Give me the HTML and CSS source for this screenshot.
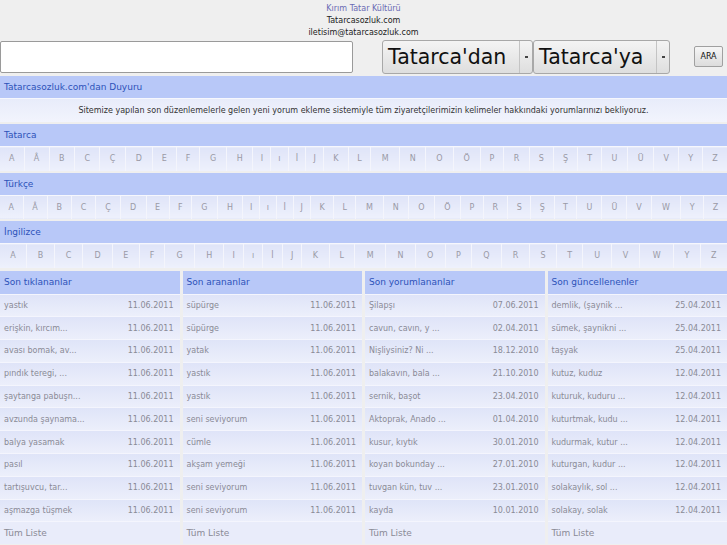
FILE: index.html
```html
<!DOCTYPE html>
<html lang="tr">
<head>
<meta charset="utf-8">
<title>Tatarcasozluk.com</title>
<link rel="stylesheet" href="styles.css">
</head>
<body>
<header class="top">
  <div class="top-line link">Kırım Tatar Kültürü</div>
  <div class="top-line">Tatarcasozluk.com</div>
  <div class="top-line">iletisim@tatarcasozluk.com</div>
</header>
<form class="search">
  <input class="query" type="text">
  <div class="select sel-from"><span class="sel-text">Tatarca'dan</span><span class="sel-arrow"><i></i></span></div>
  <div class="select sel-to"><span class="sel-text">Tatarca'ya</span><span class="sel-arrow"><i></i></span></div>
  <span class="btn">ARA</span>
</form>

<section class="block">
  <div class="bar">Tatarcasozluk.com'dan Duyuru</div>
  <div class="notice">Sitemize yapılan son düzenlemelerle gelen yeni yorum ekleme sistemiyle tüm ziyaretçilerimizin kelimeler hakkındaki yorumlarınızı bekliyoruz.</div>
</section>

<section class="block">
  <div class="bar">Tatarca</div>
  <table class="letters"><tr>
    <td>A</td><td>Â</td><td>B</td><td>C</td><td>Ç</td><td>D</td><td>E</td><td>F</td><td>G</td><td>H</td><td>I</td><td>ı</td><td>İ</td><td>J</td><td>K</td><td>L</td><td>M</td><td>N</td><td>O</td><td>Ö</td><td>P</td><td>R</td><td>S</td><td>Ş</td><td>T</td><td>U</td><td>Ü</td><td>V</td><td>Y</td><td>Z</td>
  </tr></table>
</section>

<section class="block">
  <div class="bar">Türkçe</div>
  <table class="letters"><tr>
    <td>A</td><td>Â</td><td>B</td><td>C</td><td>Ç</td><td>D</td><td>E</td><td>F</td><td>G</td><td>H</td><td>I</td><td>ı</td><td>İ</td><td>J</td><td>K</td><td>L</td><td>M</td><td>N</td><td>O</td><td>Ö</td><td>P</td><td>R</td><td>S</td><td>Ş</td><td>T</td><td>U</td><td>Ü</td><td>V</td><td>W</td><td>Y</td><td>Z</td>
  </tr></table>
</section>

<section class="block">
  <div class="bar">İngilizce</div>
  <table class="letters"><tr>
    <td>A</td><td>B</td><td>C</td><td>D</td><td>E</td><td>F</td><td>G</td><td>H</td><td>I</td><td>ı</td><td>İ</td><td>J</td><td>K</td><td>L</td><td>M</td><td>N</td><td>O</td><td>P</td><td>Q</td><td>R</td><td>S</td><td>T</td><td>U</td><td>V</td><td>W</td><td>Y</td><td>Z</td>
  </tr></table>
</section>

<div class="lists">
  <div class="list">
    <div class="bar">Son tıklananlar</div>
    <div class="row"><span>yastık</span><span>11.06.2011</span></div>
    <div class="row"><span>erişkin, kırcım...</span><span>11.06.2011</span></div>
    <div class="row"><span>avası bomak, av...</span><span>11.06.2011</span></div>
    <div class="row"><span>pındık teregi, ...</span><span>11.06.2011</span></div>
    <div class="row"><span>şaytanga pabuşn...</span><span>11.06.2011</span></div>
    <div class="row"><span>avzunda şaynama...</span><span>11.06.2011</span></div>
    <div class="row"><span>balya yasamak</span><span>11.06.2011</span></div>
    <div class="row"><span>pasıl</span><span>11.06.2011</span></div>
    <div class="row"><span>tartışuvcu, tar...</span><span>11.06.2011</span></div>
    <div class="row"><span>aşmazga tüşmek</span><span>11.06.2011</span></div>
    <div class="row more">Tüm Liste</div>
  </div>
  <div class="list">
    <div class="bar">Son arananlar</div>
    <div class="row"><span>süpürge</span><span>11.06.2011</span></div>
    <div class="row"><span>süpürge</span><span>11.06.2011</span></div>
    <div class="row"><span>yatak</span><span>11.06.2011</span></div>
    <div class="row"><span>yastık</span><span>11.06.2011</span></div>
    <div class="row"><span>yastık</span><span>11.06.2011</span></div>
    <div class="row"><span>seni seviyorum</span><span>11.06.2011</span></div>
    <div class="row"><span>cümle</span><span>11.06.2011</span></div>
    <div class="row"><span>akşam yemeği</span><span>11.06.2011</span></div>
    <div class="row"><span>seni seviyorum</span><span>11.06.2011</span></div>
    <div class="row"><span>seni seviyorum</span><span>11.06.2011</span></div>
    <div class="row more">Tüm Liste</div>
  </div>
  <div class="list">
    <div class="bar">Son yorumlananlar</div>
    <div class="row"><span>Şilapşı</span><span>07.06.2011</span></div>
    <div class="row"><span>cavun, cavın, y ...</span><span>02.04.2011</span></div>
    <div class="row"><span>Nişliysiniz? Ni ...</span><span>18.12.2010</span></div>
    <div class="row"><span>balakavın, bala ...</span><span>21.10.2010</span></div>
    <div class="row"><span>sernik, başot</span><span>23.04.2010</span></div>
    <div class="row"><span>Aktoprak, Anado ...</span><span>01.04.2010</span></div>
    <div class="row"><span>kusur, kıytık</span><span>30.01.2010</span></div>
    <div class="row"><span>koyan bokunday ...</span><span>27.01.2010</span></div>
    <div class="row"><span>tuvgan kün, tuv ...</span><span>23.01.2010</span></div>
    <div class="row"><span>kayda</span><span>10.01.2010</span></div>
    <div class="row more">Tüm Liste</div>
  </div>
  <div class="list">
    <div class="bar">Son güncellenenler</div>
    <div class="row"><span>demlik, (şaynik ...</span><span>25.04.2011</span></div>
    <div class="row"><span>sümek, şaynikni ...</span><span>25.04.2011</span></div>
    <div class="row"><span>taşyak</span><span>25.04.2011</span></div>
    <div class="row"><span>kutuz, kuduz</span><span>12.04.2011</span></div>
    <div class="row"><span>kuturuk, kuduru ...</span><span>12.04.2011</span></div>
    <div class="row"><span>kuturtmak, kudu ...</span><span>12.04.2011</span></div>
    <div class="row"><span>kudurmak, kutur ...</span><span>12.04.2011</span></div>
    <div class="row"><span>kuturgan, kudur ...</span><span>12.04.2011</span></div>
    <div class="row"><span>solakaylık, sol ...</span><span>12.04.2011</span></div>
    <div class="row"><span>solakay, solak</span><span>12.04.2011</span></div>
    <div class="row more">Tüm Liste</div>
  </div>
</div>
</body>
</html>
```

FILE: styles.css
```css
html, body {
  margin: 0;
  padding: 0;
}
body {
  background: #efefef;
  font-family: "DejaVu Sans", Verdana, sans-serif;
  color: #222;
  width: 727px;
  overflow: hidden;
}
.top {
  text-align: center;
  font-size: 8px;
  line-height: 12px;
  padding-top: 3px;
}
.top-line.link {
  color: #6a6ab4;
}
.search {
  display: flex;
  align-items: center;
  height: 35px;
  margin: 0;
}
.query {
  box-sizing: border-box;
  width: 353px;
  height: 32px;
  margin: 0;
  padding: 0;
  border: 1px solid #9a9a9a;
  border-radius: 2px;
  background: #fff;
}
.select {
  box-sizing: border-box;
  height: 34px;
  display: flex;
  align-items: stretch;
  border: 1px solid #a8a8a8;
  border-radius: 3px;
  background: linear-gradient(#f4f4f4, #dedede);
}
.sel-from {
  width: 151px;
  margin-left: 29px;
}
.sel-to {
  width: 137px;
  margin-left: 0;
}
.sel-text {
  flex: 1;
  font-size: 20.5px;
  line-height: 32px;
  color: #111;
  padding-left: 5px;
  white-space: nowrap;
}
.sel-arrow {
  width: 12px;
  border-left: 1px solid #c4c4c4;
  display: flex;
  align-items: center;
  justify-content: center;
}
.sel-arrow i {
  display: block;
  width: 3px;
  height: 2px;
  background: #444;
}
.btn {
  box-sizing: border-box;
  margin-left: 24px;
  width: 29px;
  height: 21px;
  border: 1px solid #a0a0a0;
  border-radius: 2px;
  background: linear-gradient(#f6f6f6, #dcdcdc);
  font-size: 8px;
  line-height: 19px;
  text-align: center;
  color: #111;
}
.block {
  margin-top: 2px;
}
.bar {
  box-sizing: border-box;
  height: 22px;
  background: #b8c8f8;
  color: #2d52b8;
  font-size: 9px;
  line-height: 22px;
  padding-left: 4px;
}
.notice {
  box-sizing: border-box;
  height: 24px;
  border-top: 1px solid #f6f7fd;
  background: linear-gradient(#e8ecfa, #f2f4fd);
  font-size: 8px;
  line-height: 23px;
  text-align: center;
  color: #333;
}
.letters {
  width: 100%;
  border-collapse: collapse;
  border-spacing: 0;
}
.letters td {
  box-sizing: border-box;
  height: 24px;
  padding: 0 2px;
  border-top: 1px solid #f6f7fd;
  border-left: 1px solid #f4f5fc;
  background: linear-gradient(#dfe4f8, #eef1fc);
  font-size: 8px;
  color: #9a9aa6;
  text-align: center;
}
.letters td:first-child {
  border-left: none;
}
.lists {
  display: grid;
  grid-template-columns: repeat(4, 1fr);
  column-gap: 3px;
  margin-top: 3px;
}
.list .bar {
  height: 23px;
  line-height: 23px;
}
.row {
  box-sizing: border-box;
  height: 22.8px;
  border-top: 1px solid #f4f5fd;
  background: linear-gradient(#dfe4f8, #eceffb);
  display: flex;
  justify-content: space-between;
  align-items: center;
  padding: 0 6px 0 4px;
  font-size: 8px;
  color: #8a8a96;
  white-space: nowrap;
}
.row.more {
  background: #e9ecfa;
  font-size: 9px;
  color: #8a8a96;
}
```
